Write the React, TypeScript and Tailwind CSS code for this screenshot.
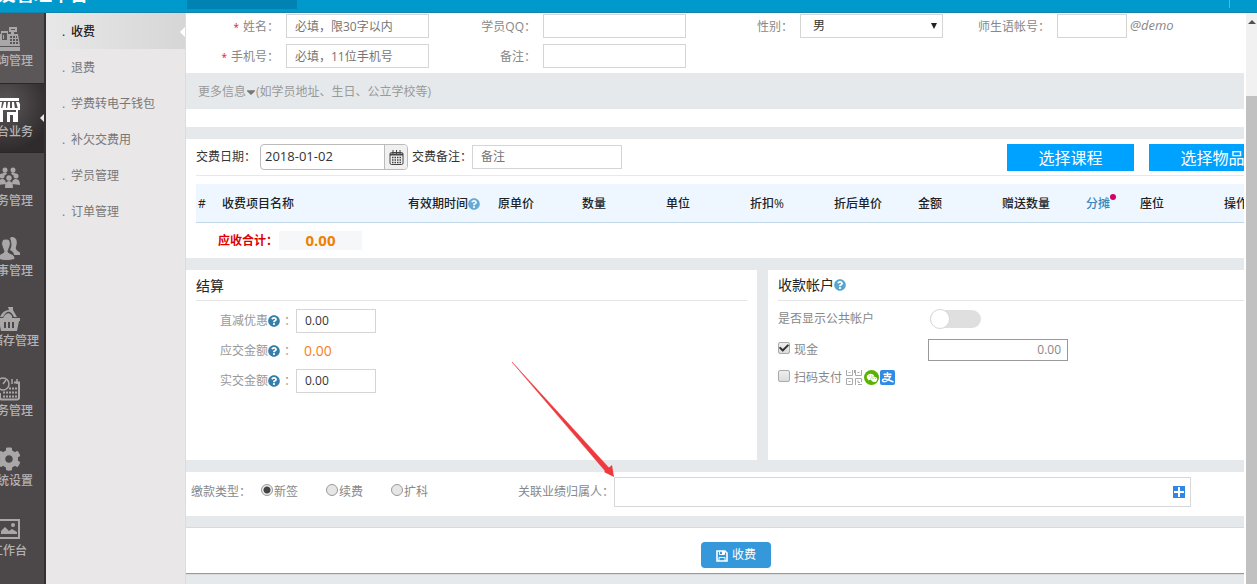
import type { ReactNode } from "react";
import { AiFillWechat } from "react-icons/ai";
import { FaCaretDown, FaCheck, FaCog, FaQuestionCircle } from "react-icons/fa";

const inputBase =
  "border border-[#d5d5d5] bg-white text-xs text-[#333] placeholder:text-[#757575] outline-none";

/* Side rail icons */
const IconBox = ({ children }: { children: ReactNode }) => (
  <svg width="22" height="24" viewBox="0 0 22 24" fill="currentColor">
    {children}
  </svg>
);

const RegisterIcon = () => (
  <IconBox>
    <path
      fillRule="evenodd"
      d="M11 0h8v5h-3v2h4l2 12H0L2 7h1V4h7v3h3V5h-2zM13 2v1h4V2zM4 6v7h5V6zM12 9v2h2V9zm3 0v2h2V9zm3 0v2h1V9zm-6 3v2h2v-2zm3 0v2h2v-2zm3 0v2h2v-2zm-6 3v2h2v-2zm3 0v2h2v-2zm3 0v2h2v-2zM5 8h1v4H5z"
    />
    <path d="M0 20h22v4H0z" />
  </IconBox>
);

const StoreIcon = () => (
  <IconBox>
    <path d="M1 0h20v3H1z" />
    <path d="M2 4h2L3 11H0zm4 0h2v7H4zm4 0h2v7H9zm4 0h2l1 7h-3zm4 0h3l3 7h-4z" />
    <path d="M0 10h22v2H0zM2 12h3v12H2zM9 14h9v10h-3v-7h-3v7H9z" />
    <path d="M18 12h2v12h-2z" />
  </IconBox>
);

const GroupIcon = () => (
  <IconBox>
    <circle cx="7" cy="3" r="2.5" />
    <circle cx="15" cy="3" r="2.5" />
    <circle cx="4" cy="9" r="2.5" />
    <circle cx="11" cy="11" r="2.7" />
    <circle cx="18" cy="9" r="2.5" />
    <path d="M4 7q3-3 5-.5l-2 2zM18 7q-3-3-5-.5l2 2z" />
    <path d="M0 18q0-6 4-6t4 5zM14 17q0-5 4-5t4 6zM7 21q0-7 4-7t4 7z" />
  </IconBox>
);

const UsersIcon = () => (
  <IconBox>
    <path d="M12 1q2-2 5 0t1 9q-1 3 3 5 2 1 1 3h-6q0-3-4-5 3-5 0-12z" />
    <path
      d="M8 2c4 0 5 3 4 7-1 3-2 4-2 6 2 2 7 2 7 7-4 2-13 2-17 0 0-5 4-5 6-7 0-2-1-3-2-6C3 5 4 2 8 2z"
      stroke="#4c4849"
      strokeWidth="1"
    />
  </IconBox>
);

const BasketIcon = () => (
  <IconBox>
    <path d="M10 0h5v3l4 7h-3q-2-4-4-5-4-1-7 5H2q3-7 9-7z" />
    <path d="M7 8q4-4 7 1v2H5z" />
    <path
      fillRule="evenodd"
      d="M0 11h22v3h-1l-2 10H3L1 14H0zm6 4v6h2v-6zm4 0v6h2v-6zm4 0v6h2v-6z"
    />
  </IconBox>
);

const ScheduleIcon = () => (
  <IconBox>
    <path
      d="M9 22.500h10q2 0 2-2V5.500h-5M2 16v4.500q0 2 2 2h6"
      fill="none"
      stroke="currentColor"
      strokeWidth="2"
    />
    <circle cx="5" cy="7" r="6" fill="none" stroke="currentColor" strokeWidth="1.5" />
    <path d="M5 7l3-4M14 2v5M19 2v5" stroke="currentColor" strokeWidth="1.5" />
    <path
      d="M11 11.500h8M5 15.500h14M5 19.500h14"
      stroke="currentColor"
      strokeWidth="2"
      strokeDasharray="2 1"
    />
  </IconBox>
);

const GearIcon = () => <FaCog size={24} />;

const PictureIcon = () => (
  <IconBox>
    <path fillRule="evenodd" d="M0 2h22v20H0zm2 2v16h18V4z" />
    <path d="M3 17v-3l4-4 4 4 3-2 5 3v2z" />
    <circle cx="15" cy="8" r="2" />
  </IconBox>
);

const railItems = [
  { label: "查询管理", icon: RegisterIcon },
  { label: "前台业务", icon: StoreIcon, active: true },
  { label: "教务管理", icon: GroupIcon },
  { label: "人事管理", icon: UsersIcon },
  { label: "进储存管理", icon: BasketIcon },
  { label: "财务管理", icon: ScheduleIcon },
  { label: "系统设置", icon: GearIcon },
  { label: "工作台", icon: PictureIcon },
];

const menuItems = ["收费", "退费", "学费转电子钱包", "补欠交费用", "学员管理", "订单管理"];

const columns = [
  { title: "#", width: "w-[24px]" },
  { title: "收费项目名称", width: "w-[186px]" },
  { title: "有效期时间", width: "w-[90px]", help: true },
  { title: "原单价", width: "w-[84px]" },
  { title: "数量", width: "w-[84px]" },
  { title: "单位", width: "w-[84px]" },
  { title: "折扣%", width: "w-[84px]" },
  { title: "折后单价", width: "w-[84px]" },
  { title: "金额", width: "w-[84px]" },
  { title: "赠送数量", width: "w-[84px]" },
  { title: "分摊", width: "w-[54px]", link: true },
  { title: "座位", width: "w-[84px]" },
  { title: "操作", width: "w-[84px]" },
];

const TopBar = () => (
  <header className="flex h-[13px] shrink-0 items-start overflow-hidden border-b border-[#1583ab] bg-[#0099cc]">
    <div className="-mt-4 w-[187px] shrink-0 overflow-hidden text-lg leading-5 font-bold whitespace-nowrap text-white">
      <span className="-ml-5">朋友管理平台</span>
    </div>
    <div className="h-[9px] w-[110px] bg-[#0083b3]" />
    <div className="mr-[27px] ml-auto h-2 w-px bg-[#4db8dc]" />
  </header>
);

const Rail = () => (
  <nav className="w-[46px] shrink-0 overflow-hidden border-r-2 border-[#353132] bg-[#4c4849]">
    {railItems.map(({ label, icon: Icon, active }, i) => (
      <a
        key={label}
        href="#"
        className={`relative -ml-7 flex h-[70px] w-[74px] flex-col items-center pt-[14px] ${
          active
            ? "border-y border-[#2b2728] bg-[radial-gradient(circle_at_45%_30%,#5c5758,#2f2b2c_75%)] text-white"
            : "text-[#aaa7a8]"
        } ${i === 0 ? "bg-[#5b5758]" : ""}`}
      >
        <Icon />
        <span className="mt-[2px] text-xs leading-4 font-medium whitespace-nowrap text-[#b5b2b3]">
          {label}
        </span>
        {active && (
          <span className="absolute top-7 right-0 border-y-[6px] border-r-[6px] border-transparent border-r-[#e9e7e8]" />
        )}
      </a>
    ))}
  </nav>
);

const SubMenu = () => (
  <nav className="w-[140px] shrink-0 border-r border-[#dcdcdd] bg-[#e9e7e8]">
    <ul>
      {menuItems.map((item, i) => (
        <li key={item} className="relative">
          <a
            href="#"
            className={`flex h-9 items-center pt-[2px] pl-4 text-xs ${
              i === 0
                ? "bg-gradient-to-r from-[#e9e8e8] to-[#d6d6d6] font-medium text-[#222]"
                : "text-[#777]"
            }`}
          >
            <span className="w-[9px]">.</span>
            {item}
          </a>
          {i === 0 && (
            <span className="absolute top-[14px] right-0 border-y-[5px] border-r-[5px] border-transparent border-r-white" />
          )}
        </li>
      ))}
    </ul>
  </nav>
);

type FieldProps = {
  id: string;
  label: string;
  required?: boolean;
  children: ReactNode;
};

const Field = ({ id, label, required, children }: FieldProps) => (
  <div className="flex h-6 items-center justify-end">
    <label htmlFor={id} className="mr-[7px] pt-[2px] whitespace-nowrap text-[#888]">
      {required && <span className="mr-1 text-[10px] text-[#e02020]">*</span>}
      {label}：
    </label>
    <div className="flex w-[143px] shrink-0 items-center">{children}</div>
  </div>
);

const StudentForm = () => (
  <section className="grid grid-cols-4 gap-x-[14px] gap-y-[6px] bg-white pt-px pr-11 pb-[5px]">
    <Field id="name" label="姓名" required>
      <input id="name" placeholder="必填，限30字以内" className={`${inputBase} h-6 w-full px-2`} />
    </Field>
    <Field id="qq" label="学员QQ">
      <input id="qq" className={`${inputBase} h-6 w-full px-2`} />
    </Field>
    <Field id="gender" label="性别">
      <div className="relative w-full">
        <select id="gender" className={`${inputBase} block h-6 w-full appearance-none px-3`}>
          <option>男</option>
          <option>女</option>
        </select>
        <span className="pointer-events-none absolute top-[9px] right-[6px] border-x-[3px] border-t-[6px] border-transparent border-t-[#222]" />
      </div>
    </Field>
    <Field id="account" label="师生语帐号">
      <input id="account" className={`${inputBase} h-6 w-[70px] px-2`} />
      <em className="ml-[3px] text-[13px] text-[#888]">@demo</em>
    </Field>
    <Field id="phone" label="手机号" required>
      <input id="phone" placeholder="必填，11位手机号" className={`${inputBase} h-6 w-full px-2`} />
    </Field>
    <Field id="memo" label="备注">
      <input id="memo" className={`${inputBase} h-6 w-full px-2`} />
    </Field>
  </section>
);

const CalendarIcon = () => (
  <svg width="15" height="15" viewBox="0 0 15 15" fill="none" stroke="#444">
    <rect x="1" y="2.500" width="13" height="12" rx="1.500" />
    <path d="M1 4.500h13" strokeWidth="2" />
    <path d="M4 0v4M7.500 0v4M11 0v4" />
    <path d="M3 7.500h9M3 10h9M3 12.500h9" strokeWidth="1.500" strokeDasharray="1.500 1" />
  </svg>
);

const ChargeItems = () => (
  <section className="overflow-hidden bg-white pl-[10px]">
    <div className="min-w-[1109px]">
      {/* Toolbar */}
      <div className="flex h-[37px] items-center border-b border-[#e8e8e8] text-[#333]">
        <label htmlFor="date" className="w-16 whitespace-nowrap">
          交费日期：
        </label>
        <div className="flex h-[26px] w-[148px] overflow-hidden rounded border border-[#bbb]">
          <input
            id="date"
            defaultValue="2018-01-02"
            className="min-w-0 flex-1 px-1 text-[13px] outline-none"
          />
          <button
            aria-label="选择日期"
            className="flex w-[23px] items-center justify-center border-l border-[#bbb] bg-[#f0f0f0]"
          >
            <CalendarIcon />
          </button>
        </div>
        <label htmlFor="payMemo" className="ml-1 w-[60px] whitespace-nowrap">
          交费备注：
        </label>
        <input
          id="payMemo"
          placeholder="备注"
          className={`${inputBase} mb-px h-6 w-[150px] px-2`}
        />
        <div className="mr-[29px] ml-auto flex gap-[15px]">
          <button className="h-[27px] w-[127px] bg-[#00a2ff] pt-px text-base leading-6 text-white">
            选择课程
          </button>
          <button className="h-[27px] w-[127px] bg-[#00a2ff] pt-px text-base leading-6 text-white">
            选择物品
          </button>
        </div>
      </div>

      {/* Items */}
      <table className="mt-2 w-full table-fixed">
        <thead>
          <tr className="h-[38px] border-b border-[#c3d8e6] bg-[#eef6ff] text-left text-xs text-[#222]">
            {columns.map((col) => (
              <th
                key={col.title}
                className={`${col.width} pt-[2px] pl-[2px] font-medium whitespace-nowrap`}
              >
                {col.link ? (
                  <a href="#" className="relative text-[#3a87ba]">
                    {col.title}
                    <span className="absolute -top-px -right-[6px] size-[6px] rounded-full bg-[#d4006a]" />
                  </a>
                ) : (
                  col.title
                )}
                {col.help && (
                  <FaQuestionCircle size={12} className="inline align-[-2px] text-[#66a9d4]" />
                )}
              </th>
            ))}
          </tr>
        </thead>
      </table>

      {/* Total */}
      <div className="flex h-[35px] items-center pl-[22px]">
        <span className="w-[61px] pt-[2px] font-bold whitespace-nowrap text-[#dd0000]">
          应收合计：
        </span>
        <span className="h-[19px] w-[83px] bg-[#f6f7f8] text-center text-[15px] leading-[18px] font-bold text-[#f08000]">
          0.00
        </span>
      </div>
    </div>
  </section>
);

const SettleLabel = ({ id, text }: { id: string; text: string }) => (
  <label htmlFor={id} className="flex w-[76px] items-center whitespace-nowrap text-[#999]">
    {text}
    <FaQuestionCircle size={12} className="mt-px mr-1 shrink-0 text-[#3580ab]" />：
  </label>
);

const Settlement = () => (
  <section className="bg-white px-[10px]">
    <h2 className="h-[31px] border-b border-[#e5e5e5] text-sm leading-[31px] text-[#222]">结算</h2>
    <div className="pt-2 pl-6">
      <div className="flex h-6 items-center">
        <SettleLabel id="discount" text="直减优惠" />
        <input id="discount" defaultValue="0.00" className={`${inputBase} h-6 w-20 px-2`} />
      </div>
      <div className="flex h-9 items-center">
        <SettleLabel id="due" text="应交金额" />
        <output id="due" className="px-2 text-sm text-[#f58220]">
          0.00
        </output>
      </div>
      <div className="flex h-6 items-center">
        <SettleLabel id="paid" text="实交金额" />
        <input id="paid" defaultValue="0.00" className={`${inputBase} h-6 w-20 px-2`} />
      </div>
    </div>
  </section>
);

type CheckProps = { id: string; label: string; checked?: boolean };

const Check = ({ id, label, checked }: CheckProps) => (
  <div className="flex items-center">
    <span className="relative mr-1 mb-1 flex size-3">
      <input
        id={id}
        type="checkbox"
        defaultChecked={checked}
        className="peer size-3 appearance-none rounded-[2px] border border-[#aaa] bg-gradient-to-b from-[#eee] to-[#ddd]"
      />
      <FaCheck
        size={10}
        className="pointer-events-none absolute top-px left-px hidden text-[#333] peer-checked:block"
      />
    </span>
    <label htmlFor={id} className="whitespace-nowrap">
      {label}
    </label>
  </div>
);

const QrIcon = () => (
  <svg width="17" height="16" viewBox="0 0 17 16" fill="none" stroke="#aaa" strokeWidth="1">
    <path d="M.5 0v5.500h6V0M9.500 0v5.500h6V0M.5 8.500h6v6h-6zM9.500 15V8.500h6V12" />
    <path d="M2.500 2.500h2M11.500 2.500h2M2.500 11.500h2M12 10.500v2h2M12 14.500h4M8.500 0v3" />
  </svg>
);

const AlipayIcon = () => (
  <svg width="15" height="15" viewBox="0 0 15 15" fill="none" stroke="#fff" strokeWidth="1.400">
    <rect width="15" height="15" rx="2" fill="#2f8be6" stroke="none" />
    <path d="M3.500 4.200h8M7.500 2v4.500M4 6.500h6.500Q9 10 6 11.300q-3 1-3.500-.6Q2.500 9 5 9q2 0 8.500 3" />
  </svg>
);

const Accounts = () => (
  <section className="bg-white pl-[10px]">
    <h2 className="flex h-[31px] items-center border-b border-[#e5e5e5] text-sm text-[#222]">
      收款帐户
      <FaQuestionCircle size={12} className="mt-px text-[#58a5d0]" />
    </h2>
    <div className="text-[#888]">
      <div className="flex h-9 items-center">
        <label htmlFor="shared" className="w-[152px]">
          是否显示公共帐户
        </label>
        <span className="relative flex h-[18px] w-[51px]">
          <input
            id="shared"
            type="checkbox"
            role="switch"
            className="peer h-[18px] w-[51px] appearance-none rounded-full bg-[#dfdfdf] checked:bg-[#3598db]"
          />
          <span className="pointer-events-none absolute -top-px left-0 size-5 rounded-full border border-[#d8d8d8] bg-white peer-checked:left-[31px]" />
        </span>
      </div>
      <div className="flex h-[26px] items-center">
        <div className="w-[150px]">
          <Check id="cash" label="现金" checked />
        </div>
        <input
          aria-label="现金金额"
          defaultValue="0.00"
          className="h-[22px] w-[140px] border border-[#999] px-[6px] text-right text-xs text-[#888] outline-none"
        />
      </div>
      <div className="flex h-[30px] items-center">
        <Check id="scan" label="扫码支付" />
        <span className="ml-1 flex items-center gap-px">
          <QrIcon />
          <span className="flex size-[15px] items-center justify-center rounded-full bg-[#5ab200]">
            <AiFillWechat size={12} className="text-white" />
          </span>
          <AlipayIcon />
        </span>
      </div>
    </div>
  </section>
);

const PayType = () => (
  <section className="flex h-11 items-center bg-white pr-[53px] pl-[5px] text-[#888]">
    <fieldset className="flex items-center pb-1 whitespace-nowrap">
      <legend className="float-left w-[70px]">缴款类型：</legend>
      {["新签", "续费", "扩科"].map((type, i) => (
        <div key={type} className="flex w-[65px] items-center">
          <input
            id={`type${i}`}
            type="radio"
            name="payType"
            defaultChecked={i === 0}
            className="mr-px mb-1 size-3 appearance-none rounded-full border border-[#999] bg-[#e6e6e6] checked:bg-[radial-gradient(circle,#444_0_3px,#eee_4px)]"
          />
          <label htmlFor={`type${i}`}>{type}</label>
        </div>
      ))}
    </fieldset>
    <label htmlFor="owner" className="ml-[62px] w-24 shrink-0 pb-1 whitespace-nowrap">
      关联业绩归属人：
    </label>
    <div className="mb-1 flex h-[30px] flex-1 items-center border border-[#d8d8d8] pr-[5px]">
      <input id="owner" className="h-full min-w-0 flex-1 px-2 outline-none" />
      <button aria-label="添加归属人">
        <svg width="12" height="12" viewBox="0 0 12 12">
          <path d="M0 0h12v12H0z" fill="#2f86e6" />
          <path d="M6 1v10M1 6h10" stroke="#fff" strokeWidth="2" />
        </svg>
      </button>
    </div>
  </section>
);

const SaveIcon = () => (
  <svg width="12" height="12" viewBox="0 0 12 12" fill="none" stroke="currentColor" className="mt-[2px]">
    <path d="M1 1h8l2 2v8H1z" strokeWidth="1.600" />
    <path d="M3.500 1v3.500h5V1M3 11V7.500h6V11" />
    <path d="M6 1h2v3H6z" fill="currentColor" stroke="none" />
  </svg>
);

const PointerArrow = () => (
  <svg
    className="pointer-events-none absolute top-[348px] left-[325px]"
    width="106"
    height="118"
    viewBox="0 0 106 118"
    fill="#ee3a3e"
  >
    <path d="M1 1l94 110 4-3z" stroke="#ee3a3e" strokeWidth=".5" />
    <path d="M103 116l-2-12-8 7z" />
  </svg>
);

export default function App() {
  return (
    <div className="flex h-screen flex-col overflow-hidden font-['Open_Sans','Noto_Sans_CJK_SC',sans-serif] text-xs">
      <TopBar />
      <div className="flex min-h-0 flex-1">
        <Rail />
        <SubMenu />
        <main className="relative min-w-0 flex-1 overflow-hidden bg-[#e6e9eb]">
          <StudentForm />
          <button className="flex h-9 w-full items-center pt-[2px] pl-3 text-[#999]">
            更多信息
            <FaCaretDown size={14} className="-mx-[2px] text-[#777]" />
            (如学员地址、生日、公立学校等)
          </button>
          <div className="mb-3 h-[18px] bg-white" />
          <ChargeItems />
          <div className="my-3 grid min-h-[190px] grid-cols-[6fr_5fr] gap-[11px]">
            <Settlement />
            <Accounts />
          </div>
          <PayType />
          <footer className="mt-[11px] border-t border-[#d5dadd] bg-white shadow-[0_1px_1px_#999]">
            <div className="flex h-[45px] min-w-[1100px] items-center justify-center pt-[9px]">
              <button className="flex h-[26px] w-[70px] items-center justify-center gap-1 rounded bg-[#3598db] pt-px text-xs text-white">
                <SaveIcon />
                收费
              </button>
            </div>
          </footer>
          <PointerArrow />
        </main>

        {/* Scroll track */}
        <div className="ml-[2px] flex w-[11px] shrink-0 flex-col items-center bg-[#f1f1f1]">
          <span className="mt-[7px] border-x-[4px] border-b-[4px] border-transparent border-b-[#505050]" />
          <div className="mt-[72px] w-full flex-1 bg-[#c1c1c1]" />
        </div>
      </div>
    </div>
  );
}
